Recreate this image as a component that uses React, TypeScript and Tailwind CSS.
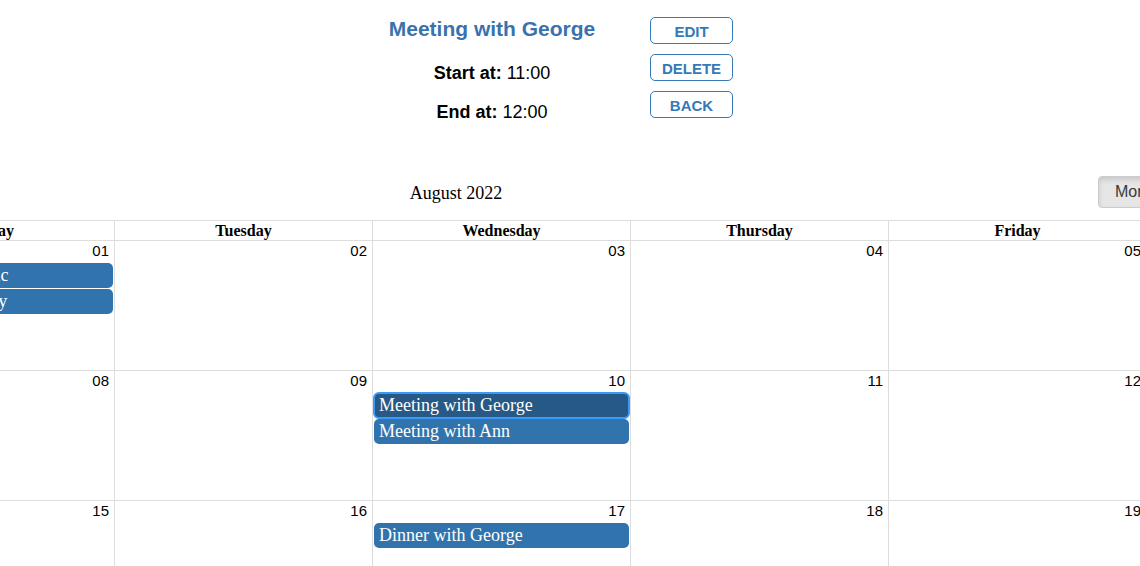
import React from "react";

type Ev = { title: string; selected?: boolean };

const days = ["Sunday", "Monday", "Tuesday", "Wednesday", "Thursday", "Friday", "Saturday"];

const weeks: { date: string; events: Ev[] }[][] = [
  [
    { date: "31", events: [] },
    { date: "01", events: [{ title: "Vaccine at the clinic" }, { title: "Eve's birthday party" }] },
    { date: "02", events: [] },
    { date: "03", events: [] },
    { date: "04", events: [] },
    { date: "05", events: [] },
    { date: "06", events: [] },
  ],
  [
    { date: "07", events: [] },
    { date: "08", events: [] },
    { date: "09", events: [] },
    { date: "10", events: [{ title: "Meeting with George", selected: true }, { title: "Meeting with Ann" }] },
    { date: "11", events: [] },
    { date: "12", events: [] },
    { date: "13", events: [] },
  ],
  [
    { date: "14", events: [] },
    { date: "15", events: [] },
    { date: "16", events: [] },
    { date: "17", events: [{ title: "Dinner with George" }] },
    { date: "18", events: [] },
    { date: "19", events: [] },
    { date: "20", events: [] },
  ],
];

function ActionButton({ label }: { label: string }) {
  return (
    <button className="w-[83px] h-[27px] pt-[2px] border border-[#337ab7] rounded-[5px] bg-white text-[#337ab7] text-[15px] font-bold leading-none font-['Liberation_Sans',Arial,sans-serif] flex items-center justify-center">
      {label}
    </button>
  );
}

function ToolbarButton({ label, active, first, last }: { label: string; active?: boolean; first?: boolean; last?: boolean }) {
  return (
    <button
      className={
        "h-[32px] px-[16px] border border-[#ccc] text-[16px] text-[#373a3c] font-['Liberation_Sans',Arial,sans-serif] leading-none -ml-px " +
        (active ? "bg-[#e6e6e6] border-[#adadad] shadow-[inset_0_3px_5px_rgba(0,0,0,0.125)] " : "bg-white ") +
        (first ? "rounded-l-[4px] ml-0 " : "") +
        (last ? "rounded-r-[4px] " : "")
      }
    >
      {label}
    </button>
  );
}

export default function App() {
  return (
    <div className="w-[1140px] h-[566px] overflow-hidden bg-white text-black font-['Liberation_Serif','Times_New_Roman',serif]">
      <div className="flex pt-[17px] pl-[362px]">
        <div className="w-[260px] flex flex-col items-center font-['Liberation_Sans',Arial,sans-serif]">
          <div className="h-[24px] text-[21px] leading-[24px] font-bold text-[#3a72ad]">Meeting with George</div>
          <div className="mt-[22px] h-[21px] text-[18px] leading-[21px]">
            <span className="font-bold">Start at:</span> 11:00
          </div>
          <div className="mt-[18px] h-[21px] text-[18px] leading-[21px]">
            <span className="font-bold">End at:</span> 12:00
          </div>
        </div>
        <div className="ml-[28px] flex flex-col gap-[10px]">
          <ActionButton label="EDIT" />
          <ActionButton label="DELETE" />
          <ActionButton label="BACK" />
        </div>
      </div>

      <div className="ml-[-402px] w-[1806px] mt-[53px]">
        <div className="flex items-center h-[32px]">
          <div className="flex w-[216px]">
            <ToolbarButton label="Today" first />
            <ToolbarButton label="Back" />
            <ToolbarButton label="Next" last />
          </div>
          <div className="flex-1 text-center text-[18px] leading-[20px] pt-[2px]">August 2022</div>
          <div className="flex w-[306px]">
            <ToolbarButton label="Month" active first />
            <ToolbarButton label="Week" />
            <ToolbarButton label="Day" />
            <ToolbarButton label="Agenda" last />
          </div>
        </div>

        <div className="mt-[12px] border-t border-[#ddd]">
          <div className="grid grid-cols-7 border-b border-[#ddd]">
            {days.map((d, i) => (
              <div
                key={d}
                className={"h-[19px] text-center text-[16px] leading-[19px] font-bold " + (i > 0 ? "border-l border-[#ddd]" : "")}
              >
                {d}
              </div>
            ))}
          </div>
          {weeks.map((week, wi) => (
            <div key={wi} className="grid grid-cols-7 h-[130px] border-b border-[#ddd]">
              {week.map((cell, ci) => (
                <div key={ci} className={"flex flex-col " + (ci > 0 ? "border-l border-[#ddd]" : "")}>
                  <div className="h-[22px] pt-[1px] pr-[5px] text-right text-[15px] leading-[17px] font-['Liberation_Sans',Arial,sans-serif]">
                    {cell.date}
                  </div>
                  <div className="flex flex-col gap-[1px] px-[1px]">
                    {cell.events.map((ev) => (
                      <div
                        key={ev.title}
                        className={
                          "h-[25px] rounded-[5px] px-[5px] py-[2px] text-white text-[18px] leading-[21px] whitespace-nowrap overflow-hidden " +
                          (ev.selected ? "bg-[#265985] outline outline-2 outline-[#3b99fc] -outline-offset-1" : "bg-[#3174ad]")
                        }
                      >
                        {ev.title}
                      </div>
                    ))}
                  </div>
                </div>
              ))}
            </div>
          ))}
        </div>
      </div>
    </div>
  );
}
